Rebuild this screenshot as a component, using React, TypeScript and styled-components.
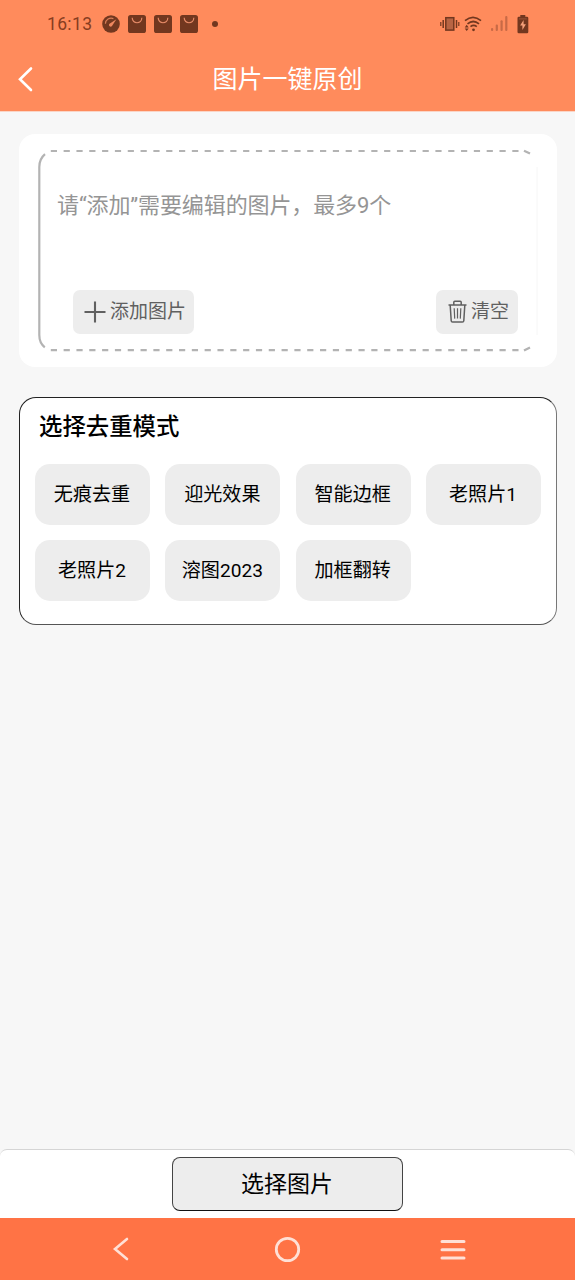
import React from "react";
import styled, { createGlobalStyle } from "styled-components";

const GlobalStyle = createGlobalStyle`
  * { box-sizing: border-box; }
  body {
    margin: 0;
    font-family: Roboto, "Noto Sans CJK SC", sans-serif;
    font-weight: 400;
    color: #000;
  }
  button { font: inherit; color: inherit; border: 0; padding: 0; margin: 0; white-space: nowrap; }
  svg { display: block; flex: none; }
`;

const Screen = styled.div`
  width: 575px;
  height: 1280px;
  display: flex;
  flex-direction: column;
  background: #f7f7f7;
  overflow: hidden;
`;

const Header = styled.header`
  height: 111px;
  flex: none;
  background: #ff8b5c;
  box-shadow: 0 1px 0 #fbd5c6;
`;

const StatusBar = styled.div`
  height: 47px;
  padding: 0 46px 0 47px;
  display: flex;
  align-items: center;
  justify-content: space-between;
  color: #72371f;
`;

const StatusGroup = styled.div<{ $gap: number }>`
  display: flex;
  align-items: center;
  gap: ${(p) => p.$gap}px;
`;

const Clock = styled.span`
  width: 47px;
  font-size: 17.5px;
  line-height: 20px;
  letter-spacing: 0.35px;
  padding-top: 1px;
  color: #873d21;
`;

const Dot = styled.span`
  width: 6px;
  height: 6px;
  margin-left: 6px;
  border-radius: 50%;
  background: currentColor;
`;

const TitleBar = styled.div`
  height: 64px;
  padding: 0 17px;
  display: grid;
  grid-template-columns: 40px 1fr 40px;
  align-items: center;
  color: #fff;
`;

const Title = styled.h1`
  margin: 0;
  padding-top: 2px;
  font-size: 25px;
  line-height: 36px;
  font-weight: 400;
  text-align: center;
`;

const Content = styled.main`
  flex: 1;
  padding: 23px 18px 0 19px;
  display: flex;
  flex-direction: column;
  gap: 30px;
`;

const PickerCard = styled.section`
  position: relative;
  height: 233px;
  padding: 57px 39px 33px 38px;
  display: flex;
  flex-direction: column;
  justify-content: space-between;
  background: #fff;
  border-radius: 16px;
`;

const Frame = styled.svg`
  position: absolute;
  inset: 0;
`;

const Hint = styled.p`
  margin: 0;
  font-size: 22px;
  line-height: 30px;
  letter-spacing: -0.11px;
  color: #959595;
`;

const Actions = styled.div`
  display: flex;
  justify-content: space-between;
  padding-left: 16px;
`;

const ActionButton = styled.button<{ $width: number }>`
  width: ${(p) => p.$width}px;
  height: 44px;
  padding: 0 0 1px 3px;
  display: flex;
  align-items: center;
  justify-content: center;
  gap: 4px;
  border-radius: 7px;
  background: #ededed;
  color: #606060;
  font-size: 19px;
  line-height: 27px;
`;

const ModeCard = styled.section`
  height: 228px;
  padding: 10px 15px 0;
  background: #fff;
  border: 1px solid #222;
  border-right-color: #777;
  border-bottom-color: #555;
  border-radius: 17px;
`;

const ModeTitle = styled.h2`
  margin: 0 0 18px 4px;
  font-size: 23.4px;
  line-height: 38px;
  font-weight: 500;
`;

const ModeGrid = styled.div`
  display: grid;
  grid-template-columns: repeat(4, 115px);
  justify-content: space-between;
  row-gap: 15px;
`;

const ModeChip = styled.button`
  height: 61px;
  padding: 0 1px 3px 0;
  border-radius: 15px;
  background: #ededed;
  font-size: 19.1px;
`;

const Footer = styled.footer`
  height: 69px;
  flex: none;
  display: flex;
  justify-content: center;
  padding-top: 7px;
  background: #fff;
  border-top: 1px solid #d5d5d5;
  border-radius: 7px 7px 0 0;
`;

const SelectButton = styled.button`
  width: 231px;
  height: 54px;
  padding: 0 1px 4px 0;
  border: 1px solid #444;
  border-bottom-color: #111;
  border-radius: 8px;
  background: #ededed;
  font-size: 23px;
`;

const SystemNav = styled.nav`
  height: 62px;
  flex: none;
  display: flex;
  align-items: center;
  justify-content: space-between;
  padding: 0 108px 0 107px;
  background: #ff7345;
  color: #ffe0d6;
`;

const modes = ["无痕去重", "迎光效果", "智能边框", "老照片1", "老照片2", "溶图2023", "加框翻转"];

const Gauge = () => (
  <svg width="18" height="18" viewBox="0 0 18 18">
    <circle cx="9" cy="9" r="8.8" fill="currentColor" />
    <path d="M3.4 8.8A5.8 5.8 0 0 1 11.4 3.6" fill="none" stroke="#d87d58" strokeWidth="1.2" />
    <path d="M14.4 4.2L10.3 10.4A1.7 1.7 0 1 1 7.9 8.4Z" fill="#ee875f" />
  </svg>
);

const Bag = () => (
  <svg width="18" height="18" viewBox="0 0 18 18">
    <rect width="18" height="18" rx="2.6" fill="currentColor" />
    <path d="M4.2 2.8C4.2 9.4 13.8 9.4 13.8 2.8" fill="none" stroke="#e58a67" strokeWidth="1.2" />
  </svg>
);

const Vibrate = () => (
  <svg width="20" height="16" viewBox="0 0 20 16">
    <rect x="5.8" y="1.7" width="8" height="12.4" fill="#b76443" stroke="currentColor" strokeWidth="1.5" />
    <path d="M3.2 4v8M16.5 4v8" stroke="currentColor" strokeWidth="1.5" />
    <path d="M.8 6v4M18.8 6v4" stroke="currentColor" strokeWidth="1.2" />
  </svg>
);

const Wifi = () => (
  <svg width="18" height="16" viewBox="0 0 18 16">
    <g fill="none" stroke="currentColor" strokeWidth="1.7">
      <path d="M1 4.7Q9 -1.9 17 4.7" />
      <path d="M3.5 7.8Q9.3 3.2 15 7.8" />
      <path d="M6.5 10.6Q9.6 8.3 12.8 10.6" />
    </g>
    <circle cx="9.5" cy="13.8" r="1.4" fill="currentColor" />
    <path d="M.7 11.4L2.7 8.7L4.7 11.4ZM.7 12.4L2.7 15.1L4.7 12.4Z" fill="currentColor" />
  </svg>
);

const Signal = () => (
  <svg width="17" height="17" viewBox="0 0 17 17" fill="#c86a46">
    <rect x="0" y="13" width="2.2" height="3" rx="1" />
    <rect x="4.7" y="9.5" width="2.2" height="6.5" rx="1" />
    <rect x="9.5" y="5.3" width="2.2" height="10.7" rx="1" />
    <rect x="14.2" y="1" width="2.2" height="15" rx="1" />
  </svg>
);

const Battery = () => (
  <svg width="12" height="20" viewBox="0 0 12 20">
    <path d="M3.3 1h5v1.8H10A1.3 1.3 0 0 1 11.3 4v14a1.3 1.3 0 0 1-1.3 1.3H1.8A1.3 1.3 0 0 1 .5 18V4a1.3 1.3 0 0 1 1.3-1.2h1.5Z" fill="currentColor" />
    <path d="M6.6 6L3.1 11.4H5.4V16L8.9 10.3H6.6Z" fill="#f5a07a" />
    <path d="M2 4.9h7.8" stroke="#a65a3c" strokeWidth=".8" />
  </svg>
);

const DashedFrame = () => (
  <Frame width="538" height="233" viewBox="0 0 538 233" fill="none" stroke="#b3b3b3" strokeWidth="2.2">
    <path d="M26 20.2Q20.3 25 20.3 33V201Q20.3 209 25.8 213.3" />
    <path d="M31.8 17H505" strokeDasharray="6.2 6.62" />
    <path d="M31.8 216.2H505" strokeDasharray="6.2 6.62" />
    <path d="M505 16.7L511 19.6M505 216.5L511 213.4" />
    <path d="M518 33V201" stroke="#f6f6f6" strokeWidth="1" />
  </Frame>
);

const Plus = () => (
  <svg width="22" height="22" viewBox="0 0 22 22" stroke="currentColor" strokeWidth="2.1">
    <path d="M11 .5v21M.5 11h21" />
  </svg>
);

const Trash = () => (
  <svg width="19" height="23" viewBox="0 0 19 23" fill="none" stroke="currentColor" strokeWidth="1.5">
    <path d="M.5 5h18M5.8 4.8V2.2a1 1 0 0 1 1-1h5.4a1 1 0 0 1 1 1v2.6M2.2 5.2L3.2 20.7a1.4 1.4 0 0 0 1.4 1.3h9.8a1.4 1.4 0 0 0 1.4-1.3L16.8 5.2" />
    <path d="M6.2 8.2L6.7 18.6M9.5 8.2V18.6M12.8 8.2L12.3 18.6" strokeWidth="1.2" />
  </svg>
);

export default function App() {
  return (
    <Screen>
      <GlobalStyle />
      <Header>
        <StatusBar>
          <StatusGroup $gap={8}>
            <Clock>16:13</Clock>
            <Gauge />
            <Bag />
            <Bag />
            <Bag />
            <Dot />
          </StatusGroup>
          <StatusGroup $gap={9}>
            <StatusGroup $gap={4}>
              <Vibrate />
              <Wifi />
            </StatusGroup>
            <Signal />
            <Battery />
          </StatusGroup>
        </StatusBar>
        <TitleBar>
          <svg width="17" height="26" viewBox="0 0 17 26" fill="none" stroke="currentColor" strokeWidth="2.6" strokeLinecap="round">
            <path d="M14 2.5L3 13.2L14 24" />
          </svg>
          <Title>图片一键原创</Title>
        </TitleBar>
      </Header>
      <Content>
        <PickerCard>
          <DashedFrame />
          <Hint>请“添加”需要编辑的图片，最多9个</Hint>
          <Actions>
            <ActionButton $width={121}><Plus />添加图片</ActionButton>
            <ActionButton $width={82}><Trash />清空</ActionButton>
          </Actions>
        </PickerCard>
        <ModeCard>
          <ModeTitle>选择去重模式</ModeTitle>
          <ModeGrid>
            {modes.map((m) => <ModeChip key={m}>{m}</ModeChip>)}
          </ModeGrid>
        </ModeCard>
      </Content>
      <Footer>
        <SelectButton>选择图片</SelectButton>
      </Footer>
      <SystemNav>
        <svg width="28" height="26" viewBox="0 0 28 26" fill="none" stroke="currentColor" strokeWidth="2.6" strokeLinecap="round">
          <path d="M20 3L8 13L20 23" />
        </svg>
        <svg width="28" height="28" viewBox="0 0 28 28" fill="none" stroke="currentColor" strokeWidth="2.8">
          <circle cx="14.5" cy="14.5" r="11.2" />
        </svg>
        <svg width="28" height="26" viewBox="0 0 28 26" stroke="currentColor" strokeWidth="3" strokeLinecap="round">
          <path d="M3 5.5h22M3 13.7h22M3 21.9h22" />
        </svg>
      </SystemNav>
    </Screen>
  );
}
